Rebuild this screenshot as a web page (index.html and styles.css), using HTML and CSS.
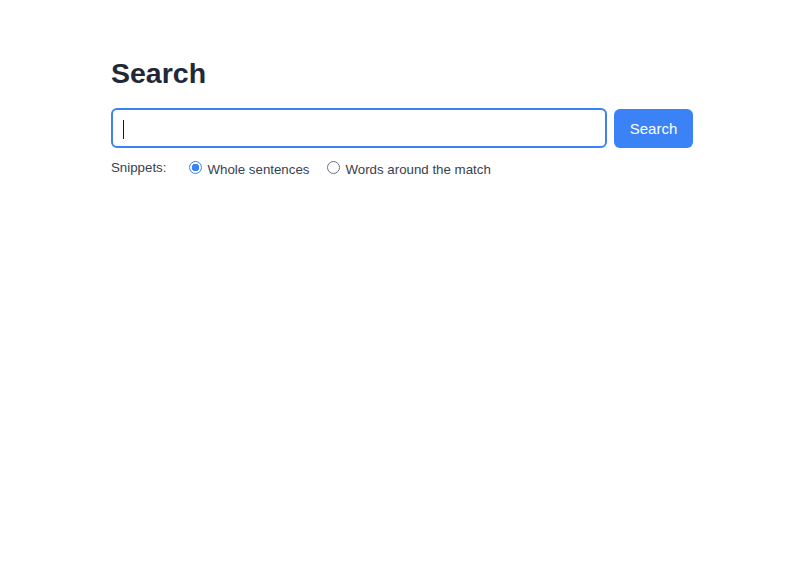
FILE: index.html
```html
<!DOCTYPE html>
<html lang="en">
<head>
<meta charset="utf-8">
<title>Search</title>
<link rel="stylesheet" href="styles.css">
</head>
<body>
<main class="page">
  <h1 class="title">Search</h1>
  <form class="search-form">
    <div class="search-row">
      <div class="search-input"><span class="caret"></span></div>
      <button type="button" class="search-btn">Search</button>
    </div>
    <div class="snippets">
      <span class="snippets-label">Snippets:</span>
      <label class="option"><input type="radio" name="snip" class="radio" checked><span class="option-text">Whole sentences</span></label>
      <label class="option"><input type="radio" name="snip" class="radio"><span class="option-text">Words around the match</span></label>
    </div>
  </form>
</main>
</body>
</html>
```

FILE: styles.css
```css
html, body {
  margin: 0;
  padding: 0;
  background: #ffffff;
}
body {
  font-family: "Liberation Sans", Arial, Helvetica, sans-serif;
  color: #1f2937;
}
.page {
  width: 582px;
  margin-left: 111px;
  padding-top: 56px;
}
.title {
  margin: 0;
  font-size: 28.5px;
  font-weight: 700;
  line-height: 34px;
  color: #1f2937;
}
.search-form {
  margin-top: 18px;
}
.search-row {
  display: flex;
  gap: 7px;
  align-items: center;
}
.search-input {
  flex: 1;
  height: 36px;
  border: 2px solid #3b82f6;
  border-radius: 6px;
  box-sizing: content-box;
  display: flex;
  align-items: center;
  padding-left: 10px;
}
.caret {
  width: 1px;
  height: 19px;
  margin-top: 2px;
  background: #111827;
}
.search-btn {
  width: 79px;
  height: 39px;
  border: none;
  border-radius: 6px;
  background: #3b82f6;
  color: #ffffff;
  font-family: "Liberation Sans", Arial, Helvetica, sans-serif;
  font-size: 15px;
  padding: 0;
  padding-top: 1px;
}
.snippets {
  display: flex;
  align-items: center;
  margin-top: 12px;
  font-size: 13.3px;
  color: #374151;
}
.snippets-label {
  margin-right: 23px;
}
.option {
  display: flex;
  align-items: center;
  margin-right: 18px;
  color: #374151;
}
.option-text {
  position: relative;
  top: 1.5px;
}
.radio {
  appearance: none;
  -webkit-appearance: none;
  margin: 0 5px 0 0;
  width: 13px;
  height: 13px;
  border: 1px solid #6b7280;
  border-radius: 50%;
  box-sizing: border-box;
  background: #ffffff;
}
.radio:checked {
  border: 1.5px solid #3b82f6;
  background: radial-gradient(circle, #3b82f6 0 3.5px, #ffffff 4px);
}
```
